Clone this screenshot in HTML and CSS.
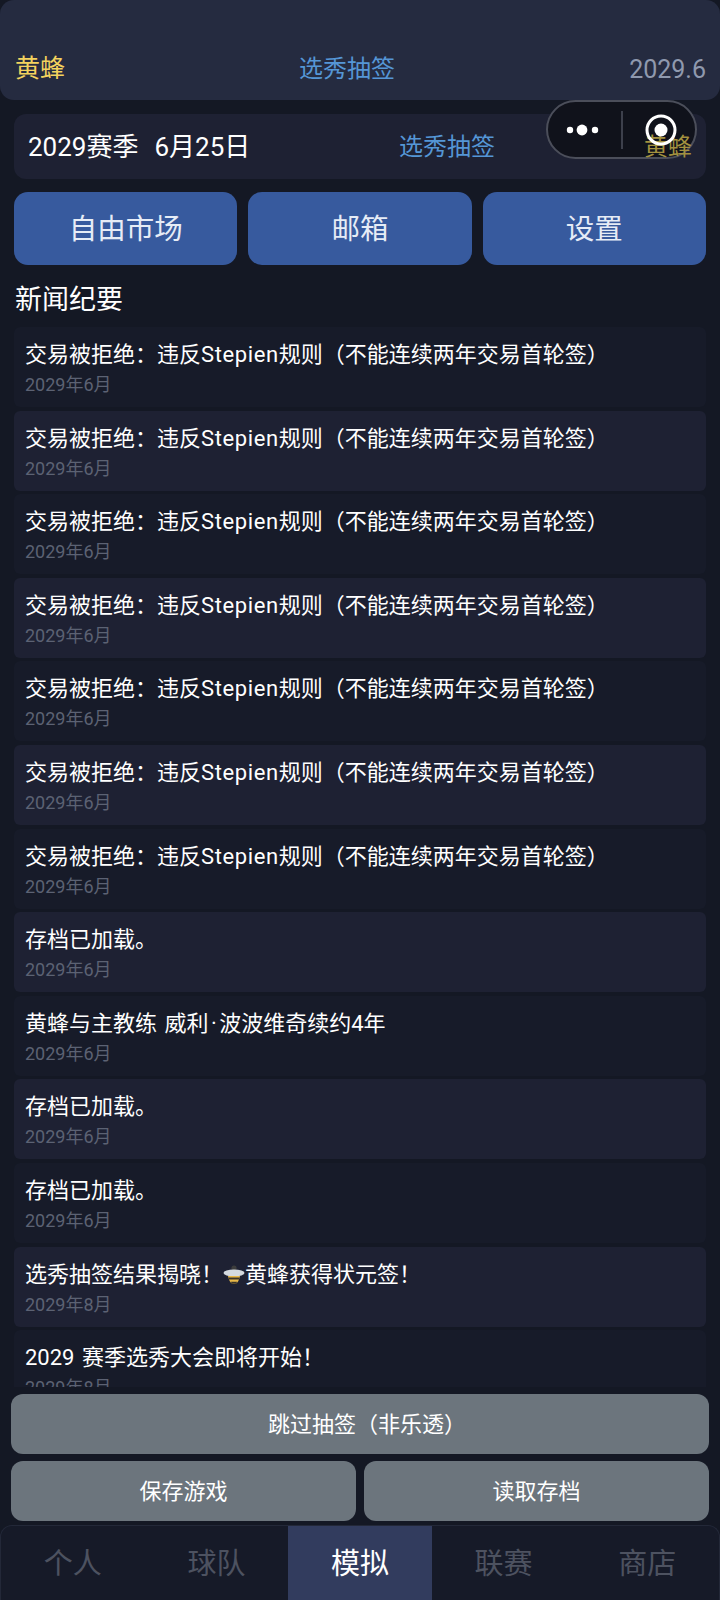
FILE: index.html
```html
<!DOCTYPE html>
<html>
    <head>
        <title>选秀抽签</title>
        <meta charset="utf-8">
        <link rel="stylesheet" href="styles.css">
    </head>

    <body>

        <header class="top_bar">
            <span class="team_name">黄蜂</span>
            <span class="phase_name">选秀抽签</span>
            <span class="top_date">2029.6</span>
        </header>

        <div class="capsule">
            <svg class="capsule_dots" width="50" height="14" viewBox="0 0 50 14">
                <circle cx="6" cy="7" r="3.2" fill="#fff"/>
                <circle cx="18" cy="7" r="5.4" fill="#fff"/>
                <circle cx="31" cy="7" r="3.2" fill="#fff"/>
            </svg>
            <span class="capsule_line"></span>
            <svg class="capsule_ring" width="34" height="34" viewBox="0 0 34 34">
                <circle cx="17" cy="17" r="14" fill="none" stroke="#fff" stroke-width="3"/>
                <circle cx="17" cy="17" r="6.5" fill="#fff"/>
            </svg>
        </div>

        <section class="season_card">
            <span class="season_text">2029赛季<span class="season_day">6月25日</span></span>
            <span class="season_phase">选秀抽签</span>
            <span class="season_team">黄蜂</span>
        </section>

        <nav class="menu_row">
            <button type="button" class="menu_button">自由市场</button>
            <button type="button" class="menu_button">邮箱</button>
            <button type="button" class="menu_button">设置</button>
        </nav>

        <h2 class="news_title">新闻纪要</h2>

        <div class="news_list">
            <div class="news_item"><div class="news_text">交易被拒绝&#xFF1A;违反<span class="latin">Stepien</span>规则&#xFF08;不能连续两年交易首轮签&#xFF09;</div><div class="news_date">2029年6月</div></div>
            <div class="news_item alt"><div class="news_text">交易被拒绝&#xFF1A;违反<span class="latin">Stepien</span>规则&#xFF08;不能连续两年交易首轮签&#xFF09;</div><div class="news_date">2029年6月</div></div>
            <div class="news_item"><div class="news_text">交易被拒绝&#xFF1A;违反<span class="latin">Stepien</span>规则&#xFF08;不能连续两年交易首轮签&#xFF09;</div><div class="news_date">2029年6月</div></div>
            <div class="news_item alt"><div class="news_text">交易被拒绝&#xFF1A;违反<span class="latin">Stepien</span>规则&#xFF08;不能连续两年交易首轮签&#xFF09;</div><div class="news_date">2029年6月</div></div>
            <div class="news_item"><div class="news_text">交易被拒绝&#xFF1A;违反<span class="latin">Stepien</span>规则&#xFF08;不能连续两年交易首轮签&#xFF09;</div><div class="news_date">2029年6月</div></div>
            <div class="news_item alt"><div class="news_text">交易被拒绝&#xFF1A;违反<span class="latin">Stepien</span>规则&#xFF08;不能连续两年交易首轮签&#xFF09;</div><div class="news_date">2029年6月</div></div>
            <div class="news_item"><div class="news_text">交易被拒绝&#xFF1A;违反<span class="latin">Stepien</span>规则&#xFF08;不能连续两年交易首轮签&#xFF09;</div><div class="news_date">2029年6月</div></div>
            <div class="news_item alt"><div class="news_text">存档已加载。</div><div class="news_date">2029年6月</div></div>
            <div class="news_item"><div class="news_text">黄蜂与主教练 威利<span class="name_dot">·</span>波波维奇续约4年</div><div class="news_date">2029年6月</div></div>
            <div class="news_item alt"><div class="news_text">存档已加载。</div><div class="news_date">2029年6月</div></div>
            <div class="news_item"><div class="news_text">存档已加载。</div><div class="news_date">2029年6月</div></div>
            <div class="news_item alt">
                <div class="news_text">选秀抽签结果揭晓&#xFF01;<svg class="bee" width="22" height="20" viewBox="0 0 22 20">
                        <circle cx="11" cy="3" r="2.6" fill="#3d3d3d"/>
                        <ellipse cx="11" cy="8" rx="10.5" ry="3.4" fill="#d4dae0"/>
                        <path d="M5 11 H17 C16 16 14 19 11 19 C8 19 6 16 5 11 Z" fill="#e9b949"/>
                        <path d="M5.4 12.4 H16.6 L16 14.4 H6 Z" fill="#3a342a"/>
                        <path d="M7.6 16.8 H14.4 L12.8 18.8 H9.2 Z" fill="#3a342a"/>
                    </svg>黄蜂获得状元签&#xFF01;</div>
                <div class="news_date">2029年8月</div>
            </div>
            <div class="news_item"><div class="news_text">2029 赛季选秀大会即将开始&#xFF01;</div><div class="news_date">2029年8月</div></div>
        </div>

        <div class="action_panel">
            <button type="button" class="action_button wide">跳过抽签&#xFF08;非乐透&#xFF09;</button>
            <div class="action_row">
                <button type="button" class="action_button">保存游戏</button>
                <button type="button" class="action_button">读取存档</button>
            </div>
        </div>

        <nav class="tab_bar">
            <span class="tab">个人</span>
            <span class="tab">球队</span>
            <span class="tab active">模拟</span>
            <span class="tab">联赛</span>
            <span class="tab">商店</span>
        </nav>

    </body>
</html>
```

FILE: styles.css
```css
html, body {
    margin: 0;
    padding: 0;
}

body {
    position: relative;
    width: 720px;
    height: 1600px;
    overflow: hidden;
    display: flex;
    flex-direction: column;
    background-color: #141824;
    color: #fff;
    font-family: Roboto, "Noto Sans CJK SC", sans-serif;
}

button {
    border: none;
    font-family: inherit;
    color: #fff;
    padding: 0 0 5px 0;
}

.top_bar {
    height: 100px;
    flex: none;
    box-sizing: border-box;
    padding: 0 14px 16px 15px;
    display: flex;
    justify-content: space-between;
    align-items: flex-end;
    background-color: #252b40;
    border-radius: 14px;
    font-size: 24px;
}

.team_name {
    color: #f4d35e;
    font-size: 25px;
}

.phase_name {
    color: #5596d6;
}

.top_date {
    color: #8f99ae;
    font-size: 25px;
}

.capsule {
    position: absolute;
    left: 546px;
    top: 100px;
    width: 151px;
    height: 59px;
    box-sizing: border-box;
    display: flex;
    align-items: center;
    border: 2px solid #4b4e5a;
    border-radius: 30px;
    background-color: #10121b;
}

.capsule_dots {
    margin-left: 16px;
    flex: none;
}

.capsule_line {
    width: 2px;
    height: 38px;
    margin-left: 7px;
    background-color: #3d404c;
    flex: none;
}

.capsule_ring {
    margin-left: 21px;
    flex: none;
    position: relative;
    z-index: 3;
}

.season_card {
    margin: 14px 14px 0 14px;
    height: 65px;
    flex: none;
    display: flex;
    align-items: center;
    padding: 0 14px 4px 14px;
    box-sizing: border-box;
    background-color: #1e2133;
    border-radius: 12px;
    font-size: 24px;
}

.season_text {
    width: 371px;
    font-size: 26px;
}

.season_day {
    margin-left: 16px;
}

.season_phase {
    color: #5596d6;
    flex: 1;
}

.season_team {
    color: #a3913f;
    position: relative;
    z-index: 2;
}

.menu_row {
    margin: 13px 14px 0 14px;
    display: flex;
    gap: 11px;
    flex: none;
}

.menu_button {
    flex: 1;
    height: 73px;
    background-color: #375a9e;
    border-radius: 14px;
    font-size: 28.5px;
    color: #e6ecf6;
}

.news_title {
    margin: 14px 15px 0 15px;
    height: 42px;
    line-height: 42px;
    font-size: 27px;
    font-weight: normal;
    flex: none;
}

.news_list {
    margin: 6px 14px 0 14px;
    flex: 1;
    min-height: 0;
    overflow: hidden;
}

.news_item {
    height: 80px;
    margin-bottom: 3.6px;
    box-sizing: border-box;
    padding: 12px 11px 0 11px;
    background-color: #171b29;
    border-radius: 6px;
}

.news_item.alt {
    background-color: #1e2133;
}

.news_text {
    font-size: 22px;
    line-height: 32px;
    color: #fff;
    white-space: nowrap;
    word-spacing: 2px;
}

.latin {
    letter-spacing: 0.6px;
}

.name_dot {
    margin: 0 2.5px;
}

.news_date {
    font-size: 18px;
    line-height: 26px;
    color: #5c6273;
    margin-top: 1px;
}

.bee {
    vertical-align: -3px;
}

.action_panel {
    margin: 0 11px;
    padding: 7px 0 4px 0;
    flex: none;
    display: flex;
    flex-direction: column;
    gap: 7px;
}

.action_row {
    display: flex;
    gap: 8px;
}

.action_button {
    flex: 1;
    height: 60px;
    background-color: #6c757d;
    border-radius: 12px;
    font-size: 22px;
}

.action_button.wide {
    flex: none;
    padding-left: 14px;
}

.tab_bar {
    height: 75px;
    flex: none;
    display: flex;
    box-sizing: border-box;
    border: 1px solid #232838;
    border-bottom: none;
    border-radius: 12px 12px 0 0;
    background-color: #161a28;
    overflow: hidden;
}

.tab {
    flex: 1;
    display: flex;
    align-items: center;
    justify-content: center;
    padding-bottom: 4px;
    font-size: 29px;
    color: #4d5260;
}

.tab.active {
    background-color: #323c5e;
    color: #fff;
}
```
